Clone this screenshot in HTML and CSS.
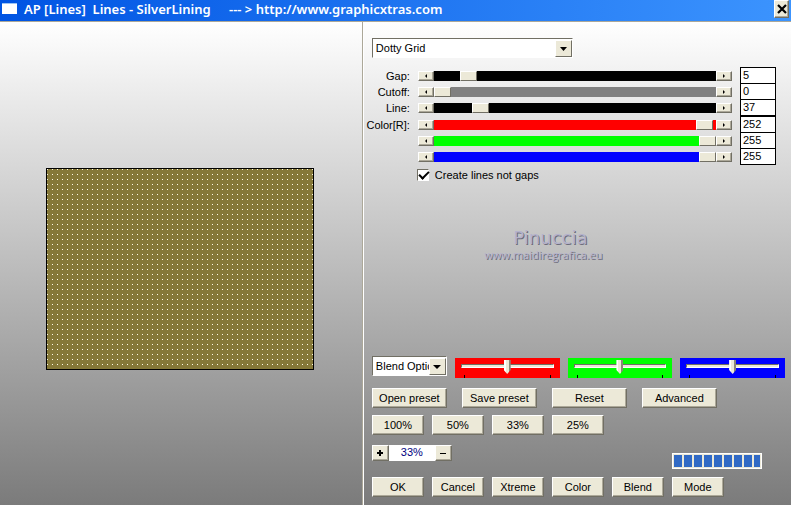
FILE: index.html
```html
<!DOCTYPE html>
<html lang="en">
<head>
  <meta charset="UTF-8">
  <title>AP [Lines] Lines - SilverLining</title>
  <link rel="stylesheet" href="styles.css">
</head>
<body>
  <header class="titlebar">
    <span class="window-icon"></span>
    <h1>AP [Lines]&nbsp; Lines - SilverLining <span class="site">--- &gt; http://www.graphicxtras.com</span></h1>
    <button class="close" aria-label="Close">
      <svg width="10" height="10" viewBox="0 0 10 10"><path d="M1 1l8 8M9 1l-8 8" stroke="#000" stroke-width="2.2"/></svg>
    </button>
  </header>

  <main class="dialog">
    <section class="preview-pane" aria-label="Preview">
      <div class="preview"></div>
    </section>

    <section class="controls">
      <div class="combo">
        <select aria-label="Effect"><option>Dotty Grid</option></select>
        <span class="drop"><svg width="7" height="4" viewBox="0 0 7 4"><path d="M0 0h7L3.500 4z"/></svg></span>
      </div>

      <div class="sliders">
        <div class="row">
          <label for="gap">Gap:</label>
          <div class="scroll black">
            <button class="arrow left" aria-label="Less gap"></button>
            <input type="range" id="gap" min="0" max="50" value="5">
            <button class="arrow right" aria-label="More gap"></button>
          </div>
          <input class="value" type="text" value="5" aria-label="Gap value">
        </div>
        <div class="row">
          <label for="cutoff">Cutoff:</label>
          <div class="scroll gray">
            <button class="arrow left" aria-label="Less cutoff"></button>
            <input type="range" id="cutoff" min="0" max="255" value="0">
            <button class="arrow right" aria-label="More cutoff"></button>
          </div>
          <input class="value" type="text" value="0" aria-label="Cutoff value">
        </div>
        <div class="row">
          <label for="line">Line:</label>
          <div class="scroll black">
            <button class="arrow left" aria-label="Less line"></button>
            <input type="range" id="line" min="0" max="255" value="37">
            <button class="arrow right" aria-label="More line"></button>
          </div>
          <input class="value" type="text" value="37" aria-label="Line value">
        </div>
        <div class="row first-color">
          <label for="red">Color[R]:</label>
          <div class="scroll red">
            <button class="arrow left" aria-label="Less red"></button>
            <input type="range" id="red" min="0" max="255" value="252">
            <button class="arrow right" aria-label="More red"></button>
          </div>
          <input class="value" type="text" value="252" aria-label="Red value">
        </div>
        <div class="row">
          <span></span>
          <div class="scroll green">
            <button class="arrow left" aria-label="Less green"></button>
            <input type="range" min="0" max="255" value="255" aria-label="Green">
            <button class="arrow right" aria-label="More green"></button>
          </div>
          <input class="value" type="text" value="255" aria-label="Green value">
        </div>
        <div class="row">
          <span></span>
          <div class="scroll blue">
            <button class="arrow left" aria-label="Less blue"></button>
            <input type="range" min="0" max="255" value="255" aria-label="Blue">
            <button class="arrow right" aria-label="More blue"></button>
          </div>
          <input class="value" type="text" value="255" aria-label="Blue value">
        </div>
        <label class="check"><input type="checkbox" checked>Create lines not gaps</label>
      </div>

      <div class="watermark">
        <p class="name">Pinuccia</p>
        <p class="url">www.maidiregrafica.eu</p>
      </div>

      <div class="blend">
        <div class="combo small">
          <select aria-label="Blend options"><option>Blend Options</option></select>
          <span class="drop"><svg width="8" height="4" viewBox="0 0 8 4"><path d="M0 0h8L4 4z"/></svg></span>
        </div>
        <div class="track red"><input type="range" value="50" aria-label="Blend red"></div>
        <div class="track green"><input type="range" value="50" aria-label="Blend green"></div>
        <div class="track blue"><input type="range" value="50" aria-label="Blend blue"></div>
      </div>

      <div class="buttons presets">
        <button>Open preset</button>
        <button>Save preset</button>
        <button>Reset</button>
        <button>Advanced</button>
      </div>
      <div class="buttons">
        <button>100%</button>
        <button>50%</button>
        <button>33%</button>
        <button>25%</button>
      </div>
      <div class="zoom-row">
        <div class="zoom">
          <button aria-label="Zoom in"><svg width="6" height="6" viewBox="0 0 6 6"><path d="M3 0v6M0 3h6" stroke="#000" stroke-width="2"/></svg></button>
          <output>33%</output>
          <button aria-label="Zoom out"><svg width="6" height="5" viewBox="0 0 6 5"><path d="M0 2.500h6" stroke="#000"/></svg></button>
        </div>
        <div class="progress" role="progressbar" aria-label="Progress"></div>
      </div>
      <div class="buttons">
        <button>OK</button>
        <button>Cancel</button>
        <button>Xtreme</button>
        <button>Color</button>
        <button>Blend</button>
        <button>Mode</button>
      </div>
    </section>
  </main>
</body>
</html>
```
FILE: styles.css
```css
* {
  box-sizing: border-box;
}

body {
  margin: 0;
  min-height: 100vh;
  display: flex;
  flex-direction: column;
  font: 11px/14px "Liberation Sans", Arial, sans-serif;
  color: #000;
}

button, input, select {
  font: inherit;
  color: inherit;
  margin: 0;
  padding: 0;
}

button {
  display: flex;
  align-items: center;
  justify-content: center;
  background: #ece9d8;
  border: 1px solid;
  border-color: #fff #716f64 #716f64 #fff;
  box-shadow: inset -1px -1px #aca899;
}

.titlebar {
  display: flex;
  align-items: center;
  height: 21px;
  padding: 0 2px;
  background: linear-gradient(to right, #0054e3, #3c94fe);
  color: #fff;
}

.window-icon {
  width: 15px;
  height: 11px;
  margin-bottom: 5px;
  background: #fff;
  border-top: 1px solid #9cc4f4;
}

.titlebar h1 {
  flex: 1;
  margin: 0 0 4px 7px;
  font: 600 13px/16px "Noto Sans", "Open Sans", sans-serif;
}

.site {
  margin-left: 15px;
}

.close {
  width: 15px;
  height: 18px;
  margin-bottom: 3px;
}

.close svg {
  flex: none;
}

.dialog {
  flex: 1;
  display: grid;
  grid-template-columns: 46fr 54fr;
  border-top: 1px solid #aca899;
  background: linear-gradient(#fff, #7b7b7b);
}

.preview-pane {
  padding: 146px 49px 0 46px;
  border-right: 1px solid #fff;
  box-shadow: inset -1px 0 #aca899;
}

.preview {
  height: 202px;
  border: 1px solid #000;
  background: conic-gradient(from 270deg at 1px 1px, #fffce8 90deg, #857838 0) 0 0 / 5px 5px;
}

.controls {
  padding: 16px 6px 8px 8px;
}

.combo {
  position: relative;
  width: 201px;
  height: 20px;
  border: 1px solid;
  border-color: #716f64 #fff #fff #716f64;
}

.combo select {
  display: block;
  width: 100%;
  height: 18px;
  padding-left: 3px;
  border: 0;
  border-radius: 0;
  appearance: none;
  background: #fff;
}

.drop {
  position: absolute;
  top: 1px;
  right: 0;
  bottom: 0;
  width: 17px;
  display: flex;
  align-items: center;
  justify-content: center;
  background: #ece9d8;
  border: 1px solid;
  border-color: #fff #716f64 #716f64 #fff;
  pointer-events: none;
}

.sliders {
  padding: 9px 9px 0 0;
}

.row {
  display: grid;
  grid-template-columns: 38px 1fr 36px;
  column-gap: 8px;
  align-items: center;
  height: 16px;
}

.first-color {
  margin-top: 1px;
}

.row label {
  white-space: nowrap;
  justify-self: end;
}

.scroll {
  display: flex;
  height: 10px;
}

.arrow {
  flex: none;
  width: 16px;
  height: 10px;
}

.arrow::before {
  content: "";
  border: 2px solid transparent;
}

.left::before {
  border-left: 0;
  border-right-color: #000;
}

.right::before {
  border-right: 0;
  border-left-color: #000;
}

.black { background: #000; }
.gray { background: #808080; }
.red { background: #f00; }
.green { background: #0f0; }
.blue { background: #00f; }

input[type="range"] {
  appearance: none;
  min-width: 0;
  background: none;
}

.scroll input {
  flex: 1;
  height: 10px;
}

.scroll input::-webkit-slider-thumb {
  appearance: none;
  width: 17px;
  height: 10px;
  background: #ece9d8;
  border: 1px solid;
  border-color: #fff #716f64 #716f64 #fff;
}

.value {
  width: 100%;
  height: 17px;
  padding: 0 2px 2px;
  border: 1px solid #000;
  background: #fff;
}

.check {
  display: flex;
  align-items: center;
  gap: 6px;
  width: max-content;
  margin: 4px 0 0 45px;
}

.check input {
  appearance: none;
  width: 12px;
  height: 12px;
  border: 1px solid;
  border-color: #716f64 #fff #fff #716f64;
  background: #fff;
}

.check input:checked::before {
  content: "";
  display: block;
  width: 8px;
  height: 4px;
  margin: 1px;
  border: solid #000;
  border-width: 0 0 2px 2px;
  transform: rotate(-45deg);
}

.watermark {
  margin: 46px 56px 0 0;
  text-align: center;
  color: #b4b2cc;
  text-shadow: 1px 1px #6c6c7c;
}

.watermark p {
  margin: 0;
}

.name {
  font: 18px/20px "DejaVu Sans", sans-serif;
}

.watermark .url {
  padding-right: 14px;
  font: 11px/14px "Open Sans", sans-serif;
}

.blend {
  display: flex;
  align-items: flex-end;
  gap: 8px;
  margin-top: 94px;
}

.small {
  width: 75px;
  align-self: flex-start;
}

.track {
  flex: 1;
  height: 20px;
  margin-top: 2px;
  padding: 2px 6px 0;
}

.track input {
  display: block;
  width: 100%;
  height: 18px;
  background:
    linear-gradient(#000, #000) 3px 100% / 1px 3px no-repeat,
    linear-gradient(#000, #000) calc(100% - 3px) 100% / 1px 3px no-repeat;
}

.track input::-webkit-slider-runnable-track {
  height: 4px;
  margin-bottom: 6px;
  background: #ece9d8;
  border: 1px solid;
  border-color: #716f64 #fff #fff #716f64;
}

.track input::-webkit-slider-thumb {
  appearance: none;
  width: 7px;
  height: 14px;
  margin-top: -5px;
  background: linear-gradient(to right, #fff 2px, #ece9d8 2px 5px, #8a8778 5px);
  clip-path: polygon(0 0, 100% 0, 100% 10px, 50% 100%, 0 10px);
}

.buttons {
  display: flex;
  gap: 8px;
  margin-top: 7px;
}

.buttons button {
  width: 52px;
  height: 20px;
}

.presets {
  gap: 15px;
  margin-top: 10px;
}

.presets button {
  width: 75px;
}

.zoom-row {
  display: flex;
  justify-content: space-between;
  align-items: flex-end;
  height: 34px;
  margin-bottom: 8px;
  padding-right: 23px;
}

.zoom {
  display: flex;
  margin-bottom: 8px;
}

.zoom button {
  width: 17px;
  height: 16px;
}

.zoom output {
  width: 46px;
  height: 16px;
  background: #fff;
  color: #000080;
  text-align: center;
}

.progress {
  width: 90px;
  height: 16px;
  border: 1px solid #fff;
  padding: 1px;
  background: repeating-linear-gradient(to right, #316ac5 0 8px, #ece9d8 8px 10px) content-box, #ece9d8;
}
```
